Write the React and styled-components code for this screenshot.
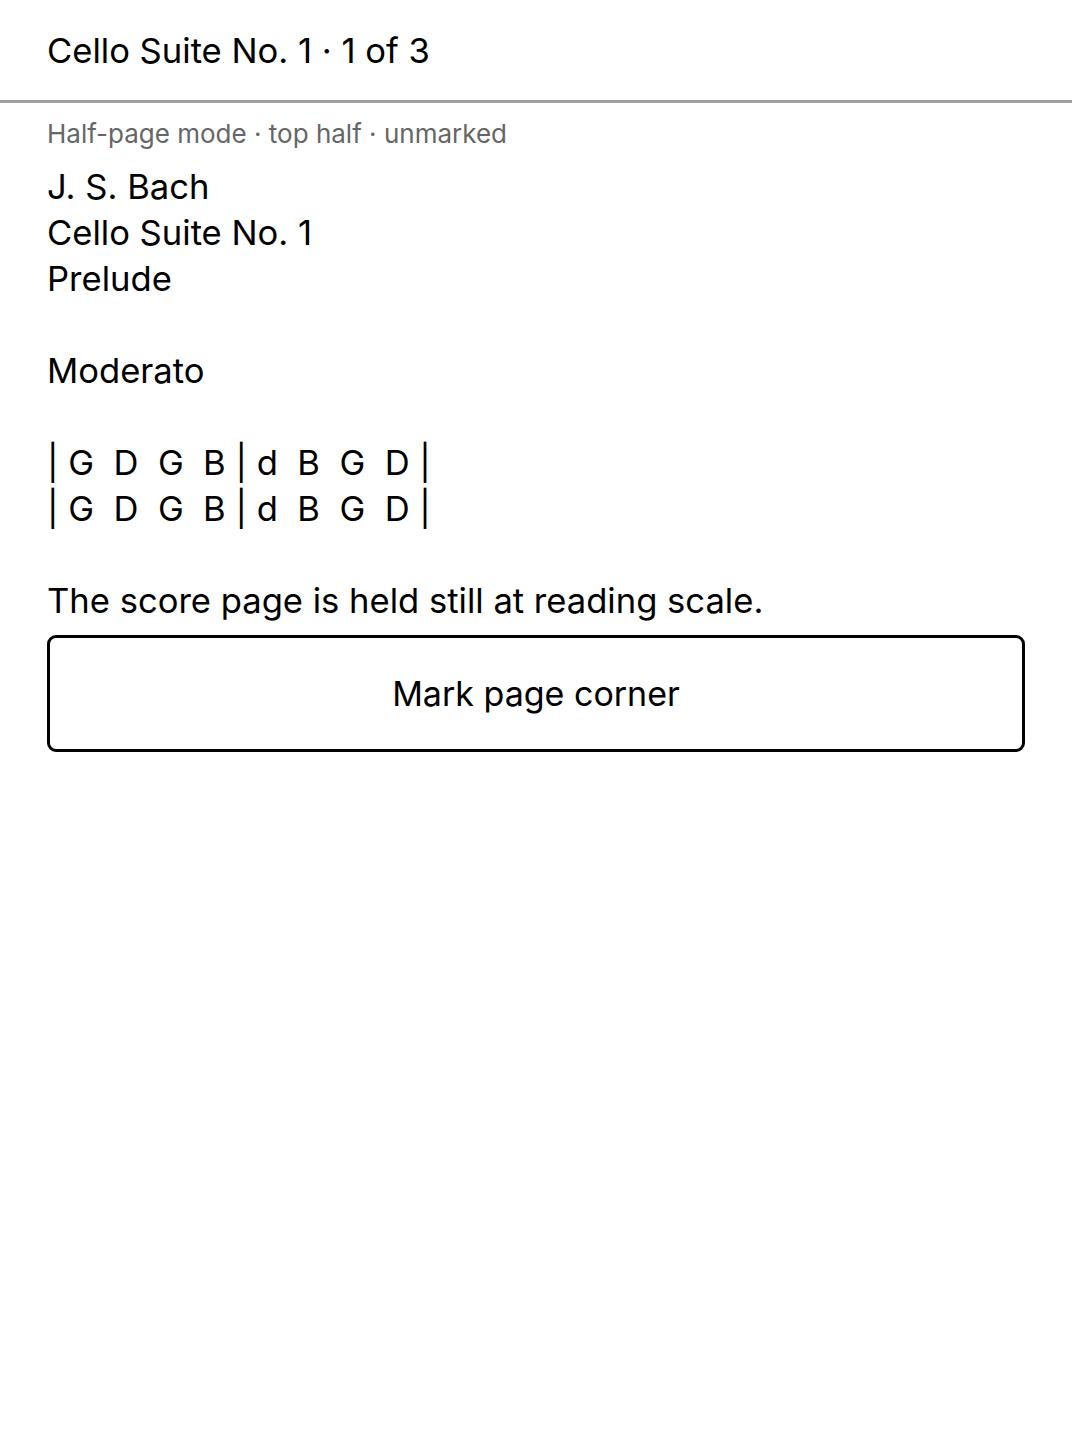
import React from "react";
import styled, { createGlobalStyle } from "styled-components";

const GlobalStyle = createGlobalStyle`
  html, body {
    margin: 0;
    padding: 0;
    background: #ffffff;
  }
  body {
    font-family: Inter, "Noto Sans", "Liberation Sans", sans-serif;
    color: #000000;
  }
`;

const score = {
  title: "Cello Suite No. 1",
  page: 1,
  pages: 3,
  mode: ["Half-page mode", "top half", "unmarked"],
  lines: [
    "J. S. Bach",
    "Cello Suite No. 1",
    "Prelude",
    "",
    "Moderato",
    "",
    "| G  D  G  B | d  B  G  D |",
    "| G  D  G  B | d  B  G  D |",
  ],
  note: "The score page is held still at reading scale.",
};

export default function App() {
  return (
    <>
      <GlobalStyle />
      <Page>
        <Header>
          <Title>
            {score.title} · {score.page} of {score.pages}
          </Title>
        </Header>
        <Body>
          <Status>{score.mode.join(" · ")}</Status>
          <ScoreText>{[...score.lines, "", score.note].join("\n")}</ScoreText>
          <MarkButton type="button">Mark page corner</MarkButton>
        </Body>
      </Page>
    </>
  );
}

const Page = styled.div`
  min-height: 100vh;
  display: flex;
  flex-direction: column;
`;

const Header = styled.header`
  height: 100px;
  display: flex;
  align-items: center;
  padding: 0 47px;
  border-bottom: 3px solid #a0a0a0;
`;

const Title = styled.h1`
  margin: 0;
  font-size: 34.6px;
  font-weight: 400;
  line-height: 46px;
`;

const Body = styled.main`
  display: flex;
  flex-direction: column;
  padding: 15px 47px 0;
`;

const Status = styled.p`
  margin: 0;
  font-size: 26px;
  line-height: 32px;
  color: #666666;
`;

const ScoreText = styled.div`
  margin-top: 13px;
  font-size: 34.6px;
  line-height: 46px;
  white-space: pre-wrap;
`;

const MarkButton = styled.button`
  margin-top: 12px;
  height: 117px;
  width: 100%;
  padding: 0;
  background: #ffffff;
  border: 3px solid #000000;
  border-radius: 9px;
  font-family: inherit;
  font-size: 34px;
  color: #000000;
`;
